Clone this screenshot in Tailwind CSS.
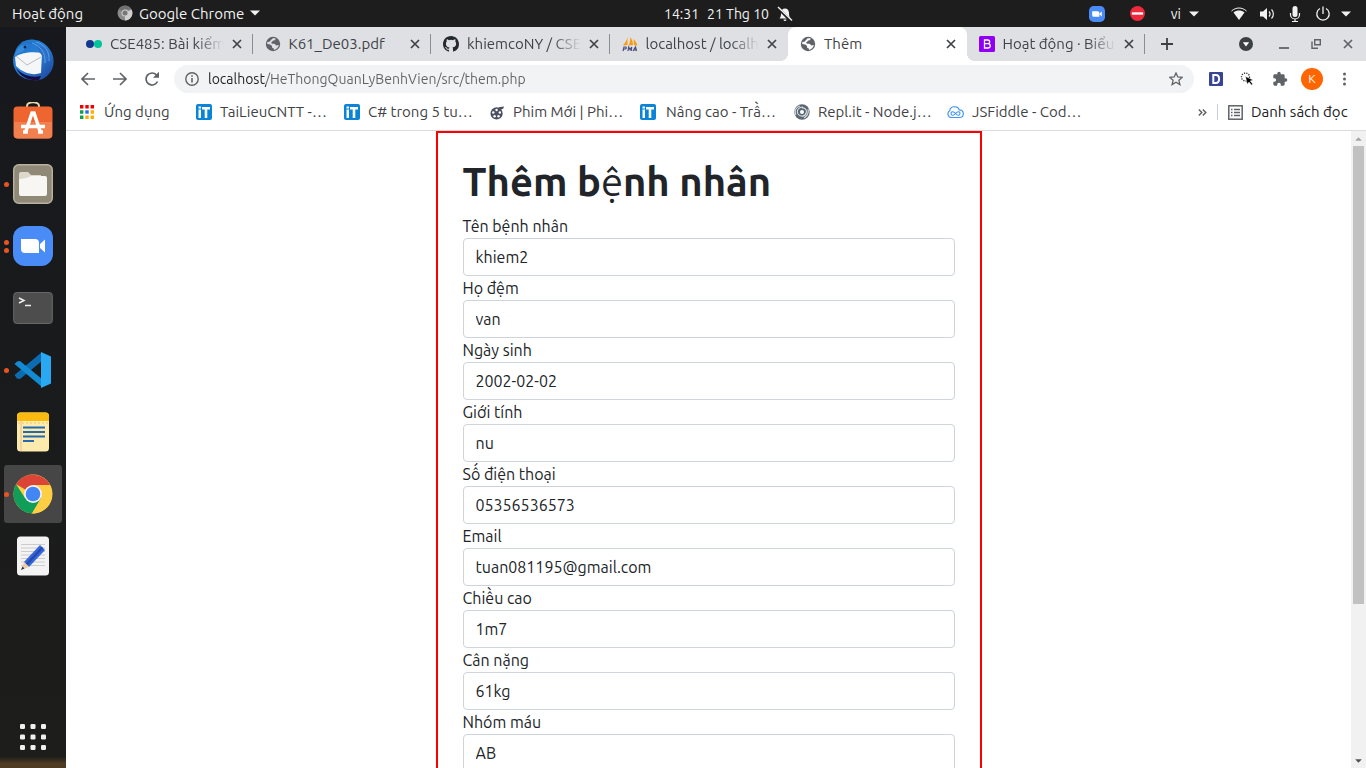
<!DOCTYPE html>
<html lang="vi">
<head>
<meta charset="utf-8">
<title>Thêm</title>
<script src="https://cdn.jsdelivr.net/npm/@tailwindcss/browser@4"></script>
</head>
<body class="flex h-screen flex-col overflow-hidden bg-white font-['Ubuntu','Noto_Sans',sans-serif] text-[#212529]">

<svg class="hidden" aria-hidden="true">
  <symbol id="close" viewBox="0 0 10 10"><path d="M1 1l8 8M9 1L1 9" fill="none" stroke="currentColor" stroke-width="1.7"/></symbol>
  <symbol id="caret" viewBox="0 0 10 6"><path d="M0 .5h10L5 5.5z" fill="currentColor"/></symbol>
  <symbol id="globe" viewBox="0 0 16 16"><circle cx="8" cy="8" r="7.200" fill="#5f6368"/><path d="M10.500 2.200c.2 1.600-.6 2.300-2.500 2.300-.3 1.600-1.700 1-1.700 2.300 0 1 1.200 1 2.700 1 1.600 0 1.400 1.700 2.500 1.700 1 0 1.600-.6 2.400-.5-.6 2.500-2.500 4.500-5 4.900v-1.500c-1.600 0-2-.8-1.900-2.200C6.300 8.600 4.500 8.200 2.200 8c0-.8.100-1.500.4-2.200 1.300.5 2.500-.2 3-1.300.5-1.200 1.500-1 2-2.300z" fill="currentColor"/></symbol>
  <symbol id="itbook" viewBox="0 0 16 16"><rect width="16" height="16" rx="2" fill="#0a84d6"/><path d="M2.500 5.500H5V14H2.500zM2.500 2.500H5v2H2.500zM6 3h8v2.500h-2.700V14H8.700V5.500H6z" fill="#fff"/></symbol>
  <symbol id="zoom" viewBox="0 0 40 40"><rect width="40" height="40" rx="12" fill="#4a8cf7"/><path d="M8 13h14a4 4 0 0 1 4 4v10H12a4 4 0 0 1-4-4zM27 18l5-4.500v13L27 22z" fill="#fff"/></symbol>
</svg>

<header class="grid h-[27px] shrink-0 grid-cols-[664fr_auto_573fr] items-center bg-[#1d1d1d] text-sm text-[#f2f2f2]">
  <div class="flex items-center pl-3 text-[15px]">
    <button class="w-[105px] text-left whitespace-nowrap">Hoạt động</button>
    <button class="flex items-center gap-[6px] whitespace-nowrap">
      <svg class="size-4" viewBox="0 0 16 16"><circle cx="8" cy="8" r="7.500" fill="#8b8b8b"/><path d="M8 8L1.500 4.300A7.500 7.500 0 0 1 14.500 4.500H8z" fill="#707070"/><path d="M8 8l6.500-3.500A7.500 7.500 0 0 1 8 15.500z" fill="#d0d0d0"/><circle cx="8" cy="8" r="3.500" fill="#ccc"/><circle cx="8" cy="8" r="2.500" fill="#777"/></svg>
      Google Chrome
      <svg class="h-[6px] w-[10px]"><use href="#caret"/></svg>
    </button>
  </div>
  <button class="flex items-center gap-2 whitespace-nowrap"><span>14:31</span><span>21 Thg 10</span>
    <svg class="size-4" viewBox="0 0 16 16"><path d="M2.500 12.500C4 11 4 9 4 7c0-2.500 1.500-4.500 4-4.500S12 4.500 12 7c0 2 .2 4 1.700 5.500zM6.500 13.500h3a1.500 1.500 0 0 1-3 0z" fill="#f2f2f2"/><path d="M1 2l13 13" stroke="#1d1d1d" stroke-width="3"/><path d="M1 1l14 13.500" stroke="#f2f2f2" stroke-width="1.400"/></svg>
  </button>
  <div class="flex items-center justify-end pr-[15px]">
    <button class="mr-[25px]" aria-label="Zoom"><svg class="block size-4"><use href="#zoom"/></svg></button>
    <button class="mr-[26px]" aria-label="Không làm phiền"><svg class="block size-[15px]" viewBox="0 0 16 16"><circle cx="8" cy="8" r="8" fill="#f0283c"/><path d="M2 8h12" stroke="#fff" stroke-width="2.500"/></svg></button>
    <button class="mr-8 flex items-center gap-2">vi <svg class="h-[6px] w-[10px]"><use href="#caret"/></svg></button>
    <button class="flex items-center" aria-label="Hệ thống">
      <svg class="mr-3 size-4" viewBox="0 0 16 16"><path d="M.5 5C5 1 11 1 15.500 5" fill="none" stroke="#f2f2f2"/><path d="M2.500 6.500c3.500-2.600 7.500-2.600 11 0L8 14z" fill="#f2f2f2"/></svg>
      <svg class="mr-3 size-4" viewBox="0 0 16 16"><path d="M1 5.500h3L8 2v12l-4-3.500H1z" fill="#f2f2f2"/><path d="M10 5.500c1.300 1.500 1.300 3.500 0 5M12.500 3.500c2.500 2.500 2.500 6.500 0 9" fill="none" stroke="#f2f2f2" stroke-width="1.200"/></svg>
      <svg class="mr-3 size-4" viewBox="0 0 16 16"><rect x="5.500" y="0" width="5" height="11" rx="2.500" fill="#f2f2f2"/><path d="M3.500 7v1.500a4.500 4.500 0 0 0 9 0V7M8 13v2.500M5 15.500h6" fill="none" stroke="#f2f2f2" stroke-width="1.200"/></svg>
      <svg class="mr-[10px] size-4" viewBox="0 0 16 16"><path d="M5 2.500a6.200 6.200 0 1 0 6 0M8 .5V8" fill="none" stroke="#f2f2f2" stroke-width="1.300"/></svg>
      <svg class="h-[6px] w-[10px]"><use href="#caret"/></svg>
    </button>
  </div>
</header>

<div class="flex min-h-0 flex-1">
  <nav class="flex w-[66px] shrink-0 flex-col items-center gap-1 bg-linear-to-b from-[#17181d] via-[#1a1b1b] via-60% to-[#1d1d1b] pt-1" aria-label="Dock">
    <button class="flex size-[58px] items-center justify-center" aria-label="Thunderbird">
      <svg class="size-11" viewBox="0 0 44 44"><defs><linearGradient id="tb" x1="0" y1="0" x2="1" y2="1"><stop offset="0" stop-color="#1575c8"/><stop offset=".5" stop-color="#2b7fd6"/><stop offset="1" stop-color="#1d3f97"/></linearGradient></defs>
      <path d="M4 14C7 4 17 0 24 2c4 0 9 3 12 6 8 8 9 20 2 28-5 6-12 7-16 6-12 0-20-9-20-20 0-3 1-6 2-8z" fill="url(#tb)"/><path d="M5 30c7 8 17 10 25 8l-2 4C18 43 9 39 5 30z" fill="#160d42"/><path d="M4 19c5-4 17-6 27-4l-1 20c-8 3-18 0-25-7z" fill="#f5f6f8"/><path d="M5 18l11 9 14-8" fill="none" stroke="#b8bcc4"/><path d="M10 4c8-2 14 0 17 7 2 6 7 6 5 17 6-5 7-12 4-18" fill="#2c6fc6"/><path d="M25 4c8 2 14 9 13 19M21 5c8 3 14 9 13 20" fill="none" stroke="#54a3e9"/><path d="M4 18C5 10 11 5 17 8l-5 5c-3 2-6 3-8 5z" fill="#398bda"/><circle cx="14" cy="9" r="1.500" fill="#0b2e5e"/></svg>
    </button>
    <button class="flex size-[58px] items-center justify-center" aria-label="Ubuntu Software">
      <svg class="size-10" viewBox="0 0 40 40"><path d="M14 6V4c0-5 12-5 12 0v2" fill="none" stroke="#ead8b0" stroke-width="2"/><rect x=".5" y="4.500" width="39" height="32" rx="4" fill="#ee6530"/><path d="M1 20h38v12.500a4 4 0 0 1-4 4H5a4 4 0 0 1-4-4z" fill="#f2804f"/><path d="M13 29l6-18h2l6 18" fill="none" stroke="#fff" stroke-width="3.500"/><path d="M8 24.500h24M10 30h5M25 30h5" fill="none" stroke="#fff" stroke-width="3.500"/></svg>
    </button>
    <button class="relative flex size-[58px] items-center justify-center" aria-label="Tệp">
      <span class="absolute left-0 size-[5px] rounded-full bg-[#e95420]"></span>
      <svg class="size-10" viewBox="0 0 40 40"><rect x=".7" y=".7" width="38.600" height="38.600" rx="5" fill="#908978" stroke="#b8b29f" stroke-width="1.400"/><path d="M6 10a2 2 0 0 1 2-2h7l3 3h10v6H6z" fill="#ddd8cc"/><path d="M6 15c3 0 9-1 12-3h14a2 2 0 0 1 2 2v16a2 2 0 0 1-2 2H8a2 2 0 0 1-2-2z" fill="#f7f6f3"/></svg>
    </button>
    <button class="relative flex size-[58px] items-center justify-center" aria-label="Zoom">
      <span class="absolute left-0 flex flex-col gap-[3px]"><span class="size-[5px] rounded-full bg-[#e95420]"></span><span class="size-[5px] rounded-full bg-[#e95420]"></span></span>
      <svg class="size-10"><use href="#zoom"/></svg>
    </button>
    <button class="flex size-[58px] items-center justify-center" aria-label="Terminal">
      <svg class="size-10" viewBox="0 0 40 40"><rect x=".7" y="4.500" width="38.600" height="31" rx="3" fill="#4d4d4d" stroke="#686868"/><path d="M6 10l5 2.500L6 15M12 17.500h6" fill="none" stroke="#eee" stroke-width="1.500"/></svg>
    </button>
    <button class="relative flex size-[58px] items-center justify-center" aria-label="Visual Studio Code">
      <span class="absolute left-0 size-[5px] rounded-full bg-[#e95420]"></span>
      <svg class="size-10" viewBox="0 0 40 40"><path d="M1.500 25L4 28.500l3 .5L29 11V2z" fill="#0b6cb0"/><path d="M1.500 14L4 11.500 7 11l22 18v8z" fill="#138ad2"/><path d="M28 2l10 4.500v27L28 38z" fill="#2aa9f2"/></svg>
    </button>
    <button class="flex size-[58px] items-center justify-center" aria-label="Ghi chú">
      <svg class="size-10" viewBox="0 0 40 40"><rect x="4" y=".5" width="32" height="39" rx="3.500" fill="#fdebad"/><path d="M4 9V4A3.500 3.500 0 0 1 7.500.5h25A3.500 3.500 0 0 1 36 4v5z" fill="#fcb90e"/><path d="M5 11h30" stroke="#e9ca68" stroke-dasharray="2 2"/><path d="M8 9v30" stroke="#f5b78f"/><path d="M10 15.500h22M10 20h22M10 24.500h22M10 29h11" stroke="#2269b0" stroke-width="1.800"/></svg>
    </button>
    <button class="relative flex size-[58px] items-center justify-center rounded-[3px] bg-[#464646]" aria-label="Google Chrome">
      <span class="absolute left-0 size-[5px] rounded-full bg-[#e95420]"></span>
      <svg class="size-10" viewBox="0 0 40 40"><circle cx="20" cy="20" r="19.500" fill="#ffce44"/><path d="M20 20L3.100 10.300A19.500 19.500 0 0 1 36.900 11H20z" fill="#db4437"/><path d="M3.100 10.300A19.500 19.500 0 0 0 19 39.500L28 24l-8-4-8 4z" fill="#0f9d58"/><path d="M28 24.500L19 39.500A19.500 19.500 0 0 0 36.900 11H20z" fill="#ffce44"/><circle cx="20" cy="20" r="9" fill="#f2f2f2"/><circle cx="20" cy="20" r="7.300" fill="#4285f4"/></svg>
    </button>
    <button class="flex size-[58px] items-center justify-center" aria-label="Trình soạn thảo">
      <svg class="size-10" viewBox="0 0 40 40"><rect x="4" y=".5" width="32" height="39" rx="3.500" fill="#f3f3f3"/><path d="M8 8.500h24M8 12h24M8 15.500h24M8 19h24M8 22.500h24M8 26h24M8 29.500h24" stroke="#ccc"/><path d="M27 9l5 5-16 17-5-5z" fill="#3466d9"/><path d="M29.500 11.500L13.500 28.500" stroke="#2349ab" stroke-width="2"/><path d="M11 26l5 5-7.500 2.500z" fill="#eccda0"/><path d="M9.500 30.500l2 2-3.500 1.500z" fill="#333"/></svg>
    </button>
    <div class="mt-auto flex w-full flex-col items-center bg-linear-to-b from-transparent from-75% to-[#4d3c22] to-90% pb-[17px]">
      <button aria-label="Hiện ứng dụng"><svg class="block size-7" viewBox="0 0 28 28" fill="#f0f0f0"><rect x="1" y="1" width="5" height="5" rx="1.200"/><rect x="11.500" y="1" width="5" height="5" rx="1.200"/><rect x="22" y="1" width="5" height="5" rx="1.200"/><rect x="1" y="11.500" width="5" height="5" rx="1.200"/><rect x="11.500" y="11.500" width="5" height="5" rx="1.200"/><rect x="22" y="11.500" width="5" height="5" rx="1.200"/><rect x="1" y="22" width="5" height="5" rx="1.200"/><rect x="11.500" y="22" width="5" height="5" rx="1.200"/><rect x="22" y="22" width="5" height="5" rx="1.200"/></svg></button>
    </div>
  </nav>

  <div class="flex min-w-0 flex-1 flex-col">
    <div class="flex h-[34px] shrink-0 items-center bg-[#dee0e4] pl-2 text-[15px] text-[#3f4347]">
      <div class="grid h-full max-w-[1071px] flex-1 grid-cols-6" role="tablist">
        <div class="flex min-w-0 items-center pl-3" role="tab">
          <svg class="size-4 shrink-0" viewBox="0 0 16 16"><circle cx="4" cy="8" r="4" fill="#123a8c"/><circle cx="12" cy="8" r="4" fill="#00c49a"/></svg>
          <span class="ml-2 flex-1 overflow-hidden whitespace-nowrap [mask-image:linear-gradient(to_right,black_75%,transparent)]">CSE485: Bài kiểm</span>
          <button class="mr-[10px] ml-2 shrink-0" aria-label="Đóng"><svg class="block size-[10px]"><use href="#close"/></svg></button>
          <div class="h-5 w-px bg-[#8a8d91]"></div>
        </div>
        <div class="flex min-w-0 items-center pl-3" role="tab">
          <svg class="size-4 shrink-0 text-[#dee0e4]"><use href="#globe"/></svg>
          <span class="ml-2 flex-1 overflow-hidden whitespace-nowrap">K61_De03.pdf</span>
          <button class="mr-[10px] ml-2 shrink-0" aria-label="Đóng"><svg class="block size-[10px]"><use href="#close"/></svg></button>
          <div class="h-5 w-px bg-[#8a8d91]"></div>
        </div>
        <div class="flex min-w-0 items-center pl-3" role="tab">
          <svg class="size-4 shrink-0" viewBox="0 0 16 16"><path fill="#24292e" d="M8 0C3.580 0 0 3.580 0 8c0 3.540 2.290 6.530 5.470 7.590.4.070.55-.17.55-.38 0-.19-.01-.82-.01-1.490-2.010.37-2.530-.49-2.690-.94-.09-.23-.48-.94-.82-1.130-.28-.15-.68-.52-.01-.53.63-.01 1.080.58 1.230.82.72 1.210 1.870.87 2.330.66.070-.52.28-.87.51-1.070-1.780-.2-3.640-.89-3.640-3.950 0-.87.31-1.590.82-2.150-.08-.2-.36-1.020.08-2.120 0 0 .67-.21 2.200.82a7.600 7.600 0 0 1 4 0c1.530-1.040 2.200-.82 2.200-.82.44 1.100.16 1.920.08 2.120.51.56.82 1.270.82 2.150 0 3.070-1.870 3.750-3.650 3.950.29.25.54.73.54 1.480 0 1.070-.01 1.930-.01 2.200 0 .21.15.46.55.38A8 8 0 0 0 16 8c0-4.420-3.580-8-8-8z"/></svg>
          <span class="ml-2 flex-1 overflow-hidden whitespace-nowrap [mask-image:linear-gradient(to_right,black_75%,transparent)]">khiemcoNY / CSE</span>
          <button class="mr-[10px] ml-2 shrink-0" aria-label="Đóng"><svg class="block size-[10px]"><use href="#close"/></svg></button>
          <div class="h-5 w-px bg-[#8a8d91]"></div>
        </div>
        <div class="flex min-w-0 items-center pl-3" role="tab">
          <svg class="size-4 shrink-0" viewBox="0 0 16 16"><path d="M5.500 1v8L1 9.500C3 7 5 4 5.500 1zM8 1c2 2 3 5 3 8L6.500 9.500C8 7 8.500 4 8 1zM11.500 3c2 2 3 4 4 6.500l-3.500-.3z" fill="#f89c0e"/><path d="M1 15l1-4h2c1 2-.5 2-2.500 2M6 15l.7-4L8 13.500l1.700-2.500-.5 4M11 15l2.500-4 1 4M12 14h2.500" fill="none" stroke="#4c4c7c" stroke-width="1.200"/></svg>
          <span class="ml-2 flex-1 overflow-hidden whitespace-nowrap [mask-image:linear-gradient(to_right,black_75%,transparent)]">localhost / localh</span>
          <button class="mr-[11px] ml-2 shrink-0" aria-label="Đóng"><svg class="block size-[10px]"><use href="#close"/></svg></button>
        </div>
        <div class="relative flex min-w-0 items-center rounded-t-lg bg-white pl-3 before:absolute before:bottom-0 before:-left-2 before:size-2 before:bg-[radial-gradient(circle_at_0_0,transparent_8px,white_8px)] after:absolute after:-right-2 after:bottom-0 after:size-2 after:bg-[radial-gradient(circle_at_100%_0,transparent_8px,white_8px)]" role="tab" aria-selected="true">
          <svg class="size-4 shrink-0 text-white"><use href="#globe"/></svg>
          <span class="ml-2 flex-1 overflow-hidden whitespace-nowrap">Thêm</span>
          <button class="mr-[11px] ml-2 shrink-0" aria-label="Đóng"><svg class="block size-[10px]"><use href="#close"/></svg></button>
        </div>
        <div class="flex min-w-0 items-center pl-3" role="tab">
          <svg class="size-4 shrink-0" viewBox="0 0 16 16"><rect width="16" height="16" rx="1.500" fill="#9000f5"/><path d="M5.500 4h3.200c2.600 0 2.600 3.700 0 3.700H5.500zm0 3.700h3.500c3 0 3 4.300 0 4.300H5.500z" fill="none" stroke="#fff" stroke-width="1.300"/></svg>
          <span class="ml-2 flex-1 overflow-hidden whitespace-nowrap [mask-image:linear-gradient(to_right,black_75%,transparent)]">Hoạt động · Biểu</span>
          <button class="mr-[10px] ml-2 shrink-0" aria-label="Đóng"><svg class="block size-[10px]"><use href="#close"/></svg></button>
          <div class="h-5 w-px bg-[#8a8d91]"></div>
        </div>
      </div>
      <button class="ml-4" aria-label="Tab mới"><svg class="block size-3" viewBox="0 0 12 12"><path d="M6 0v12M0 6h12" stroke="#3c4043" stroke-width="1.800"/></svg></button>
      <div class="ml-auto flex items-center pr-[13px]">
        <button class="mr-[26px]" aria-label="Tìm tab"><svg class="block size-[14px]" viewBox="0 0 14 14"><circle cx="7" cy="7" r="7" fill="#3c4043"/><path d="M3.800 5.200h6.400L7 9.500z" fill="#fff"/></svg></button>
        <button class="mr-[22px]" aria-label="Thu nhỏ"><svg class="block size-[10px]" viewBox="0 0 10 10"><path d="M0 9h10" stroke="#5f6368" stroke-width="1.800"/></svg></button>
        <button class="mr-[22px]" aria-label="Khôi phục"><svg class="block size-[10px]" viewBox="0 0 10 10"><path d="M3.700.7h5.600v5.100H3.700zM1 2.500v6.700h6" fill="none" stroke="#5f6368" stroke-width="1.400"/></svg></button>
        <button class="text-[#5f6368]" aria-label="Đóng cửa sổ"><svg class="block size-[10px]"><use href="#close"/></svg></button>
      </div>
    </div>

    <div class="flex h-[35px] shrink-0 items-center pr-[18px] pl-[14px] text-[#5f6368]">
      <button class="mr-4" aria-label="Quay lại"><svg class="block size-4" viewBox="0 0 16 16"><path d="M15 8H2M8 2L2 8l6 6" fill="none" stroke="currentColor" stroke-width="1.700"/></svg></button>
      <button class="mr-4" aria-label="Tiến"><svg class="block size-4" viewBox="0 0 16 16"><path d="M1 8h13M8 2l6 6-6 6" fill="none" stroke="currentColor" stroke-width="1.700"/></svg></button>
      <button class="mr-[14px]" aria-label="Tải lại"><svg class="block size-4" viewBox="0 0 16 16"><path d="M13.500 10.500A6 6 0 1 1 12.500 4l1.500 2" fill="none" stroke="currentColor" stroke-width="1.700"/><path d="M15 .8v6H9z" fill="currentColor"/></svg></button>
      <div class="flex h-7 flex-1 items-center rounded-full bg-[#f1f3f4] px-[11px]">
        <svg class="size-[14px] shrink-0" viewBox="0 0 14 14"><circle cx="7" cy="7" r="6.200" fill="none" stroke="currentColor" stroke-width="1.400"/><path d="M7 6v4.500M7 3.300v1.500" stroke="currentColor" stroke-width="1.600"/></svg>
        <input class="ml-[9px] min-w-0 flex-1 bg-linear-to-r from-[#202124] from-[58px] to-[#5f6368] to-[58px] bg-clip-text text-sm text-transparent outline-none" type="text" aria-label="Địa chỉ" value="localhost/HeThongQuanLyBenhVien/src/them.php">
        <button aria-label="Đánh dấu trang"><svg class="block size-[14px]" viewBox="0 0 14 14"><path d="M7 1l1.800 4 4.400.4-3.300 2.900 1 4.300L7 10.300l-3.900 2.300 1-4.300L.8 5.400 5.200 5z" fill="none" stroke="currentColor" stroke-width="1.300"/></svg></button>
      </div>
      <button class="ml-[15px]" aria-label="Tiện ích D"><svg class="block size-[14px]" viewBox="0 0 14 14"><rect width="14" height="14" rx="1" fill="#3a4494"/><path d="M4.300 3h2.500c4.400 0 4.400 8 0 8H4.300z" fill="none" stroke="#fff" stroke-width="2"/></svg></button>
      <button class="ml-[17px]" aria-label="Tiện ích con trỏ"><svg class="block size-[14px]" viewBox="0 0 14 14"><circle cx="5.500" cy="5" r="4" fill="none" stroke="#333" stroke-width="1.300" stroke-dasharray="1.200 1.200"/><path d="M5.500 4.500l7.500 3.500-2.800 1 2.500 3-1.200 1-2.500-3-1.700 2.200z" fill="#000" stroke="#fff" stroke-width=".4"/></svg></button>
      <button class="ml-[18px]" aria-label="Tiện ích"><svg class="block size-4" viewBox="0 0 24 24"><path fill="#5f6368" d="M20.500 11H19V7c0-1.100-.9-2-2-2h-4V3.500a2.500 2.500 0 0 0-5 0V5H4c-1.100 0-2 .9-2 2v3.800h1.500a2.700 2.700 0 0 1 0 5.400H2V20c0 1.100.9 2 2 2h3.800v-1.500a2.700 2.700 0 0 1 5.400 0V22H17c1.100 0 2-.9 2-2v-4h1.500a2.500 2.500 0 0 0 0-5z"/></svg></button>
      <button class="ml-[13px] flex size-[22px] items-center justify-center rounded-full bg-[#ff6500] text-xs text-white">K</button>
      <button class="ml-[18px]" aria-label="Tùy chọn"><svg class="block h-[14px] w-[7px]" viewBox="0 0 7 14" fill="#5f6368"><circle cx="3.500" cy="2" r="1.500"/><circle cx="3.500" cy="7" r="1.500"/><circle cx="3.500" cy="12" r="1.500"/></svg></button>
    </div>

    <div class="flex h-[35px] shrink-0 items-center border-b border-[#d9dbde] pr-[14px] pb-[2px] pl-[14px] text-[15px] whitespace-nowrap text-[#3f4347]">
      <a href="#" class="flex w-[116px] items-center gap-[10px]"><svg class="size-[14px] shrink-0" viewBox="0 0 14 14"><path d="M0 0h3.400v3.400H0zM5.300 0h3.400v3.400H5.300zM10.600 0H14v3.400h-3.400z" fill="#f20000"/><path d="M0 5.300h3.400v3.400H0zM0 10.600h3.400V14H0z" fill="#0fa04b"/><path d="M5.300 5.300h3.400v3.400H5.300z" fill="#1a73e8"/><path d="M10.600 5.300H14v3.400h-3.400zM5.300 10.600h3.400V14H5.300zM10.600 10.600H14V14h-3.400z" fill="#fbb000"/></svg>Ứng dụng</a>
      <a href="#" class="flex w-[148px] items-center gap-2"><svg class="size-4 shrink-0"><use href="#itbook"/></svg>TaiLieuCNTT -…</a>
      <a href="#" class="flex w-[146px] items-center gap-2"><svg class="size-4 shrink-0"><use href="#itbook"/></svg>C# trong 5 tu…</a>
      <a href="#" class="flex w-[150px] items-center gap-2"><svg class="size-[15px] shrink-0" viewBox="0 0 16 16"><circle cx="7" cy="9" r="6.500" fill="#4b4e60"/><path d="M9 2.500l6-1-1 2.500-3 1z" fill="#4b4e60"/><g fill="#fff"><circle cx="7" cy="5.300" r="1.300"/><circle cx="3.500" cy="8" r="1.300"/><circle cx="10.500" cy="8" r="1.300"/><circle cx="4.900" cy="12" r="1.300"/><circle cx="9.100" cy="12" r="1.300"/></g></svg>Phim Mới | Phi…</a>
      <a href="#" class="flex w-[154px] items-center gap-[10px]"><svg class="size-4 shrink-0"><use href="#itbook"/></svg>Nâng cao - Trầ…</a>
      <a href="#" class="flex w-[153px] items-center gap-2"><svg class="size-4 shrink-0" viewBox="0 0 16 16"><circle cx="8" cy="8" r="7.700" fill="#5b6770"/><circle cx="8" cy="8" r="2" fill="#fff"/><path d="M8 4c4-1 6 4 3 7M12 9c-1 4-6 4-8 1M4 10C2 6 5 3 9 3M14 5c1 4-1 7-4 9M2 11C0 7 2 3 6 2" fill="none" stroke="#d7dde0" stroke-width="1.100"/></svg>Repl.it - Node.j…</a>
      <a href="#" class="flex items-center gap-2"><svg class="h-4 w-[17px] shrink-0" viewBox="0 0 17 16"><path d="M4.500 13.500a3.600 3.600 0 0 1-1.800-6.700C2.800 4 5 2.500 7.500 2.800c2-.2 4 1 4.800 3 2.500 0 4 1.800 4 3.900 0 2-1.500 3.800-3.800 3.800z" fill="none" stroke="#4397f0" stroke-width="1.200"/><path d="M8.500 9.500c-3-3.500-4.500-1-4.500 0s1.500 3.500 4.500 0 4.500-1 4.500 0-1.500 3.500-4.500 0z" fill="none" stroke="#4397f0" stroke-width="1.100"/></svg>JSFiddle - Cod…</a>
      <button class="ml-auto" aria-label="Dấu trang khác"><svg class="block size-[9px]" viewBox="0 0 9 9"><path d="M.8 1.500l3 3-3 3M4.800 1.500l3 3-3 3" fill="none" stroke="#5f6368" stroke-width="1.500"/></svg></button>
      <div class="mx-[10px] h-4 w-px bg-[#c9ccd0]"></div>
      <button class="flex w-[124px] items-center gap-2 text-[#202124]"><svg class="size-[15px] shrink-0" viewBox="0 0 15 15"><rect x=".8" y=".8" width="13.400" height="13.400" fill="none" stroke="#5f6368" stroke-width="1.500"/><path d="M3 4.500h1.500M3 7.500h1.500M3 10.500h1.500M6 4.500h6M6 7.500h6M6 10.500h6" stroke="#5f6368" stroke-width="1.400"/></svg>Danh sách đọc</button>
    </div>

    <div class="flex min-h-0 flex-1">
      <main class="flex flex-1 items-start justify-center overflow-hidden">
        <form class="w-[546px] max-w-full border-2 border-[#ff0000] p-[25px]">
          <h1 class="mb-2 text-[40px] leading-12 font-semibold">Thêm b<span class="font-normal">ệ</span>nh nhân</h1>
          <label class="block" for="ten">Tên bệnh nhân</label>
          <input id="ten" type="text" value="khiem2" class="block h-[38px] w-full rounded border border-[#ced4da] px-3">
          <label class="block" for="hodem">Họ đệm</label>
          <input id="hodem" type="text" value="van" class="block h-[38px] w-full rounded border border-[#ced4da] px-3">
          <label class="block" for="ngaysinh">Ngày sinh</label>
          <input id="ngaysinh" type="text" value="2002-02-02" class="block h-[38px] w-full rounded border border-[#ced4da] px-3">
          <label class="block" for="gioitinh">Giới tính</label>
          <input id="gioitinh" type="text" value="nu" class="block h-[38px] w-full rounded border border-[#ced4da] px-3">
          <label class="block" for="sdt">Số điện thoại</label>
          <input id="sdt" type="text" value="05356536573" class="block h-[38px] w-full rounded border border-[#ced4da] px-3">
          <label class="block" for="email">Email</label>
          <input id="email" type="text" value="tuan081195@gmail.com" class="block h-[38px] w-full rounded border border-[#ced4da] px-3">
          <label class="block" for="chieucao">Chiều cao</label>
          <input id="chieucao" type="text" value="1m7" class="block h-[38px] w-full rounded border border-[#ced4da] px-3">
          <label class="block" for="cannang">Cân nặng</label>
          <input id="cannang" type="text" value="61kg" class="block h-[38px] w-full rounded border border-[#ced4da] px-3">
          <label class="block" for="nhommau">Nhóm máu</label>
          <input id="nhommau" type="text" value="AB" class="block h-[38px] w-full rounded border border-[#ced4da] px-3">
        </form>
      </main>
      <div class="flex w-[15px] shrink-0 flex-col items-center bg-[#f1f1f1]">
        <div class="flex h-[15px] shrink-0 items-center"><svg class="h-1 w-[7px] rotate-180 text-[#a3a3a3]" viewBox="0 0 10 6"><use href="#caret" width="10" height="6"/></svg></div>
        <div class="w-full flex-1 px-[2px]"><div class="h-[75.5%] bg-[#c1c1c1]"></div></div>
        <div class="flex h-[15px] shrink-0 items-center"><svg class="h-1 w-[7px] text-[#505050]" viewBox="0 0 10 6"><use href="#caret" width="10" height="6"/></svg></div>
      </div>
    </div>
  </div>
</div>
</body>
</html>
